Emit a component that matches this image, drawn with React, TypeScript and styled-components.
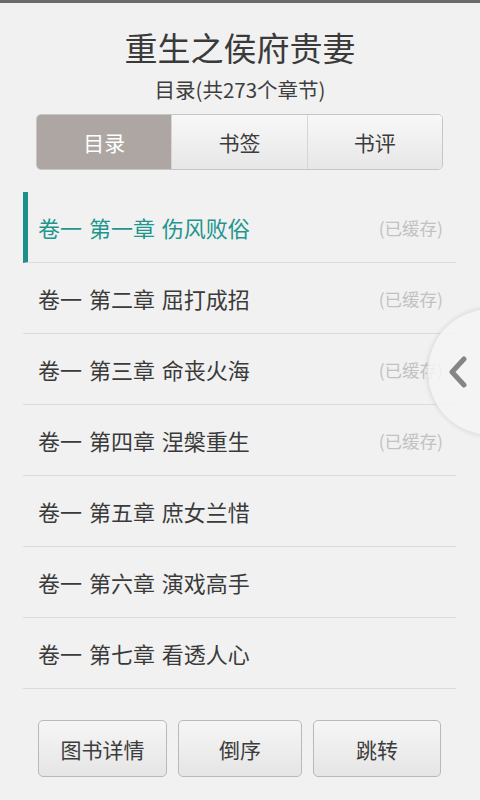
import React from 'react'
import styled, { createGlobalStyle } from 'styled-components'

const GlobalStyle = createGlobalStyle`
  html, body {
    margin: 0;
    padding: 0;
    background: #f1f1f1;
  }
  body {
    font-family: "Noto Sans CJK SC", "Noto Sans", sans-serif;
    overflow: hidden;
  }
`

const Page = styled.div`
  position: relative;
  width: 480px;
  height: 800px;
  overflow: hidden;
  background: #f1f1f1;
  border-top: 3px solid #6a6a6a;
  box-sizing: border-box;
  display: flex;
  flex-direction: column;
  align-items: center;
`

const Title = styled.h1`
  margin: 24px 0 0 0;
  font-size: 33px;
  line-height: 40px;
  font-weight: 400;
  color: #3a3a3a;
`

const Subtitle = styled.div`
  margin-top: 8px;
  font-size: 20.5px;
  line-height: 28px;
  color: #3e3e3e;
`

const Tabs = styled.div`
  margin-top: 11px;
  width: 407px;
  height: 56px;
  display: flex;
  border: 1px solid #c6c6c6;
  border-radius: 5px;
  overflow: hidden;
  box-sizing: border-box;
  align-self: flex-start;
  margin-left: 36px;
`

const Tab = styled.div<{ active?: boolean }>`
  flex: 1;
  display: flex;
  align-items: center;
  justify-content: center;
  font-size: 21px;
  color: ${({ active }) => (active ? '#ffffff' : '#3c3c3c')};
  background: ${({ active }) =>
    active ? '#aea6a2' : 'linear-gradient(#f8f8f8, #e7e7e7)'};
  & + & {
    border-left: 1px solid #d6d6d6;
  }
`

const List = styled.div`
  margin-top: 22px;
  width: 433px;
  align-self: flex-start;
  margin-left: 23px;
`

const Row = styled.div<{ active?: boolean }>`
  height: 70px;
  display: flex;
  align-items: center;
  justify-content: space-between;
  padding: 0 13px 0 15px;
  border-bottom: 1px solid #dcdcdc;
  border-left: ${({ active }) => (active ? '5px solid #1e8f88' : 'none')};
  padding-left: ${({ active }) => (active ? '10px' : '15px')};
`

const ChapterName = styled.span<{ active?: boolean }>`
  font-size: 22px;
  color: ${({ active }) => (active ? '#1e958d' : '#3a3a3a')};
  word-spacing: 2px;
`

const Cached = styled.span`
  font-size: 17.5px;
  color: #c2c2c2;
`

const Actions = styled.div`
  margin-top: 31px;
  display: flex;
  gap: 11px;
  align-self: flex-start;
  margin-left: 38px;
`

const ActionButton = styled.div<{ w: number }>`
  width: ${({ w }) => w}px;
  height: 57px;
  box-sizing: border-box;
  border: 1px solid #b9b9b9;
  border-radius: 5px;
  background: linear-gradient(#f6f6f6, #e5e5e5);
  display: flex;
  align-items: center;
  justify-content: center;
  font-size: 21px;
  color: #3c3c3c;
`

const SideHandle = styled.div`
  position: absolute;
  left: 427px;
  top: 305px;
  width: 128px;
  height: 128px;
  border-radius: 50%;
  background: rgba(244, 244, 244, 0.85);
  box-shadow: 0 0 4px rgba(0, 0, 0, 0.12);
  border: 1px solid #e2e2e2;
  display: flex;
  align-items: center;
  padding-left: 20px;
  box-sizing: border-box;
`

const chapters = [
  { name: '卷一 第一章 伤风败俗', cached: true },
  { name: '卷一 第二章 屈打成招', cached: true },
  { name: '卷一 第三章 命丧火海', cached: true },
  { name: '卷一 第四章 涅槃重生', cached: true },
  { name: '卷一 第五章 庶女兰惜', cached: false },
  { name: '卷一 第六章 演戏高手', cached: false },
  { name: '卷一 第七章 看透人心', cached: false }
]

export default function App() {
  return (
    <Page>
      <GlobalStyle />
      <Title>重生之侯府贵妻</Title>
      <Subtitle>目录(共273个章节)</Subtitle>
      <Tabs>
        <Tab active>目录</Tab>
        <Tab>书签</Tab>
        <Tab>书评</Tab>
      </Tabs>
      <List>
        {chapters.map((c, i) => (
          <Row key={c.name} active={i === 0}>
            <ChapterName active={i === 0}>{c.name}</ChapterName>
            {c.cached && <Cached>(已缓存)</Cached>}
          </Row>
        ))}
      </List>
      <Actions>
        <ActionButton w={129}>图书详情</ActionButton>
        <ActionButton w={124}>倒序</ActionButton>
        <ActionButton w={128}>跳转</ActionButton>
      </Actions>
      <SideHandle>
        <svg width="20" height="32" viewBox="0 0 20 32">
          <path d="M16 3 L4 16 L16 29" fill="none" stroke="#858585" strokeWidth="5" strokeLinecap="round" strokeLinejoin="round" />
        </svg>
      </SideHandle>
    </Page>
  )
}
